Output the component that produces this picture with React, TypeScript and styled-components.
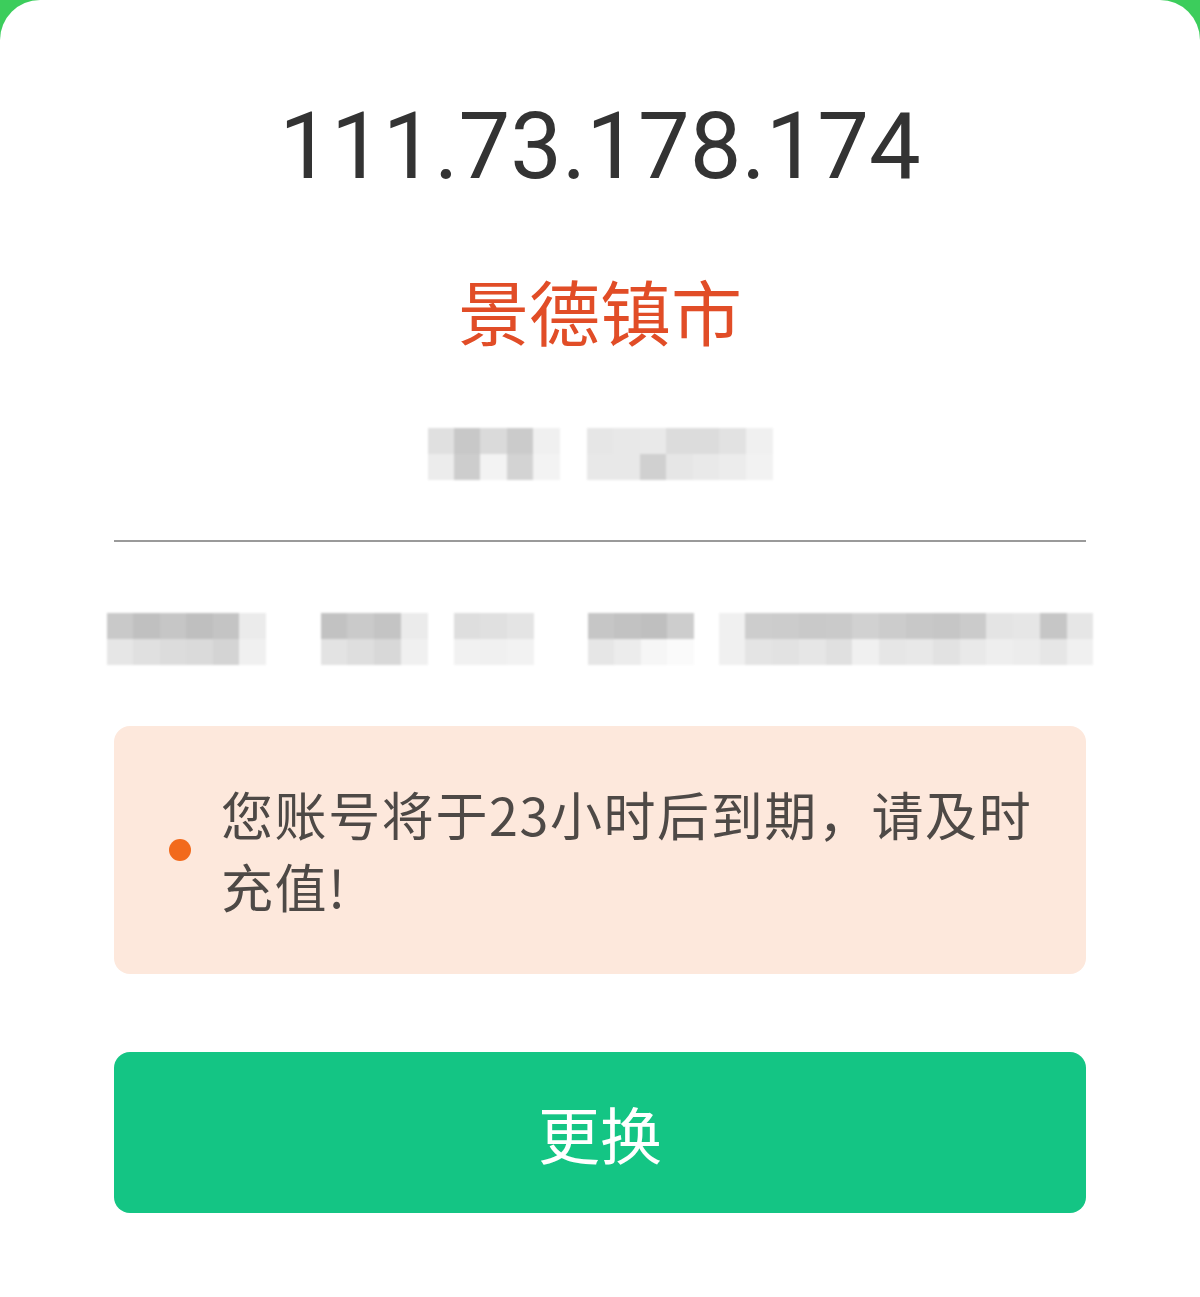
import styled, { createGlobalStyle } from 'styled-components';

const GlobalStyle = createGlobalStyle`
    html, body {
        margin: 0;
        padding: 0;
        background: #3ccd5c;
    }
    * {
        box-sizing: border-box;
    }
`;

// 马赛克数据: 每列 [上, 下] 两格灰度
type Cell = [string, string];

const ipRow: { offset: number; width: number; cells: Cell[] }[] = [
    {
        offset: 0,
        width: 132,
        cells: [
            ['#e0e0e0', '#ececec'],
            ['#c8c8c8', '#cdcdcd'],
            ['#dadada', '#f3f3f3'],
            ['#cbcbcb', '#d3d3d3'],
            ['#f0f0f0', '#f3f3f3'],
        ],
    },
    {
        offset: 27,
        width: 186,
        cells: [
            ['#e6e6e6', '#e8e8e8'],
            ['#e8e8e8', '#e8e8e8'],
            ['#e9e9e9', '#d0d0d0'],
            ['#dcdcdc', '#e6e6e6'],
            ['#dcdcdc', '#e9e9e9'],
            ['#e2e2e2', '#ececec'],
            ['#f0f0f0', '#f2f2f2'],
        ],
    },
];

const infoRow: { offset: number; width: number; cells: Cell[] }[] = [
    {
        offset: 0,
        width: 159,
        cells: [
            ['#c9c9c9', '#e6e6e6'],
            ['#c0c0c0', '#e0e0e0'],
            ['#c6c6c6', '#dcdcdc'],
            ['#bfbfbf', '#dadada'],
            ['#c4c4c4', '#d4d4d4'],
            ['#ebebeb', '#f0f0f0'],
        ],
    },
    {
        offset: 55,
        width: 107,
        cells: [
            ['#c2c2c2', '#e3e3e3'],
            ['#cacaca', '#dedede'],
            ['#c4c4c4', '#d8d8d8'],
            ['#ebebeb', '#f0f0f0'],
        ],
    },
    {
        offset: 26,
        width: 80,
        cells: [
            ['#dedede', '#f1f1f1'],
            ['#e0e0e0', '#f0f0f0'],
            ['#e4e4e4', '#f2f2f2'],
        ],
    },
    {
        offset: 54,
        width: 106,
        cells: [
            ['#c6c6c6', '#e6e6e6'],
            ['#c2c2c2', '#ececec'],
            ['#bfbfbf', '#f6f6f6'],
            ['#cdcdcd', '#fafafa'],
        ],
    },
    {
        offset: 25,
        width: 375,
        cells: [
            ['#f0f0f0', '#f0f0f0'],
            ['#cdcdcd', '#e4e4e4'],
            ['#cccccc', '#e2e2e2'],
            ['#c9c9c9', '#e6e6e6'],
            ['#cacaca', '#e0e0e0'],
            ['#d1d1d1', '#f0f0f0'],
            ['#cccccc', '#e6e6e6'],
            ['#c8c8c8', '#e8e8e8'],
            ['#c6c6c6', '#e2e2e2'],
            ['#cbcbcb', '#e9e9e9'],
            ['#e4e4e4', '#eeeeee'],
            ['#e6e6e6', '#ececec'],
            ['#c6c6c6', '#e6e6e6'],
            ['#e6e6e6', '#f0f0f0'],
        ],
    },
];

const MosaicRow = ({ groups, top }: { groups: typeof ipRow; top: number }) => (
    <Mosaic $top={top}>
        {groups.map((g, gi) => (
            <MosaicGroup key={gi} $offset={g.offset} $width={g.width}>
                {g.cells.map((c, ci) => (
                    <MosaicColumn key={ci}>
                        <MosaicCell $shade={c[0]} />
                        <MosaicCell $shade={c[1]} />
                    </MosaicColumn>
                ))}
            </MosaicGroup>
        ))}
    </Mosaic>
);

const App = () => {
    return (
        <>
            <GlobalStyle />
            <Card>
                <IpText>111.73.178.174</IpText>
                <CityText>景德镇市</CityText>
                <MosaicRow groups={ipRow} top={83} />
                <Divider />
                <MosaicRow groups={infoRow} top={71} />
                <Notice>
                    <NoticeDot />
                    <NoticeText>您账号将于23小时后到期，请及时充值!</NoticeText>
                </Notice>
                <ChangeButton type='button'>更换</ChangeButton>
            </Card>
        </>
    );
};

export default App;

// styled-components

const Card = styled.div`
    display: flex;
    flex-direction: column;
    align-items: center;

    min-height: 1297px;
    padding: 0 114px 80px;

    background: #ffffff;
    border-radius: 40px 40px 0 0;
`;

const IpText = styled.div`
    margin-top: 100px;

    font-family: Roboto, 'Liberation Sans', sans-serif;
    font-size: 92px;
    line-height: 93px;
    color: #333333;
`;

const CityText = styled.div`
    margin-top: 80px;

    font-family: 'Noto Sans CJK SC', sans-serif;
    font-size: 71px;
    line-height: 72px;
    color: #e14d27;
`;

const Mosaic = styled.div<{ $top: number }>`
    display: flex;
    justify-content: center;

    margin-top: ${p => p.$top}px;
    filter: blur(1.2px);
`;

const MosaicGroup = styled.div<{ $offset: number; $width: number }>`
    display: flex;

    width: ${p => p.$width}px;
    margin-left: ${p => p.$offset}px;
`;

const MosaicColumn = styled.div`
    display: flex;
    flex: 1;
    flex-direction: column;
`;

const MosaicCell = styled.div<{ $shade: string }>`
    height: 26px;
    background: ${p => p.$shade};
`;

const Divider = styled.div`
    align-self: stretch;

    height: 2px;
    margin-top: 60px;

    background: #9a9a9a;
`;

const Notice = styled.div`
    display: flex;
    align-items: center;
    align-self: stretch;

    height: 248px;
    margin-top: 61px;
    padding: 0 40px 0 55px;

    background: #fde8dc;
    border-radius: 16px;
`;

const NoticeDot = styled.span`
    flex-shrink: 0;

    width: 22px;
    height: 22px;
    margin-right: 30px;

    background: #f26a1c;
    border-radius: 50%;
`;

const NoticeText = styled.p`
    margin: 0;

    font-family: 'Noto Sans CJK SC', sans-serif;
    font-size: 52px;
    line-height: 72px;
    letter-spacing: 1.6px;
    color: #4e4946;
`;

const ChangeButton = styled.button`
    align-self: stretch;

    height: 161px;
    margin-top: 78px;

    border: none;
    border-radius: 16px;
    background: #14c584;

    font-family: 'Noto Sans CJK SC', sans-serif;
    font-size: 62px;
    color: #ffffff;
`;
